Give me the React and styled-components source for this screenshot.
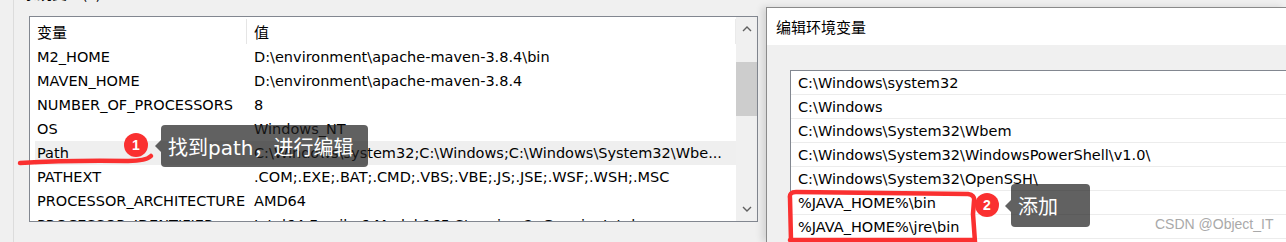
import React from 'react';
import styled, { createGlobalStyle } from 'styled-components';

const GlobalStyle = createGlobalStyle`
  html, body {
    margin: 0;
    padding: 0;
    background: #f0f0f0;
    overflow: hidden;
  }
  #root {
    height: 242px;
  }
`;

const FONT = `"DejaVu Sans", "Noto Sans CJK SC", sans-serif`;
const CJK = `"Noto Sans CJK SC", "DejaVu Sans", sans-serif`;
const TIP_FONT = `"DejaVu Sans", "Noto Sans CJK SC", sans-serif`;
const RED = '#fa3030';

const Page = styled.div`
  position: relative;
  display: flex;
  width: 1286px;
  height: 242px;
  overflow: hidden;
  font-family: ${FONT};
  font-size: 14.5px;
  color: #000;
`;

/* ---------- left window ---------- */

const LeftWindow = styled.section`
  width: 766px;
  flex: none;
  background: #f0f0f0;
  padding-left: 13px;
  box-sizing: border-box;
`;

const GroupPane = styled.div`
  height: 100%;
  border-left: 1px solid #dcdcdc;
  padding-left: 15px;
`;

const GroupLabel = styled.div`
  height: 4px;
  overflow: hidden;
  margin-left: -7px;
  font-family: ${CJK};
  font-size: 15px;
  line-height: 20px;

  span {
    display: block;
    margin-top: -17px;
  }
`;

const VarList = styled.div`
  display: flex;
  margin-top: 12px;
  width: 729px;
  height: 206px;
  box-sizing: border-box;
  border: 1px solid #828790;
  background: #fff;
`;

const VarContent = styled.div`
  flex: 1;
  padding-left: 5px;
  overflow: hidden;
`;

const HeaderRow = styled.div`
  display: flex;
  align-items: center;
  height: 28px;
  font-family: ${CJK};
  font-size: 15px;
`;

const HeaderCell = styled.div`
  display: flex;
  align-items: center;
  box-sizing: border-box;
  width: ${(p) => (p.$first ? '212px' : 'auto')};
  flex: ${(p) => (p.$first ? 'none' : '1')};
  height: 25px;
  padding-left: ${(p) => (p.$first ? '2px' : '7px')};
  border-right: 1px solid ${(p) => (p.$first ? '#e5e5e5' : '#eaeaea')};
`;

const VarRow = styled.div`
  display: flex;
  align-items: center;
  height: 24px;
  background: ${(p) => (p.$selected ? '#efefef' : 'transparent')};
  white-space: nowrap;
`;

const NameCell = styled.div`
  width: 212px;
  flex: none;
  box-sizing: border-box;
  padding-left: 2px;
`;

const ValueCell = styled.div`
  flex: 1;
  padding-left: 7px;
  overflow: hidden;
`;

const Scrollbar = styled.div`
  width: 21px;
  flex: none;
  display: flex;
  flex-direction: column;
  align-items: stretch;
  background: #f0f0f0;
`;

const ScrollArrow = styled.div`
  height: 24px;
  display: flex;
  align-items: center;
  justify-content: center;
`;

const ScrollTrack = styled.div`
  flex: 1;
  padding-top: 21px;
`;

const ScrollThumb = styled.div`
  height: 54px;
  background: #cdcdcd;
`;

/* ---------- edit dialog ---------- */

const Dialog = styled.section`
  flex: 1;
  margin-top: 7px;
  border-left: 1px solid #8a8a8a;
  border-top: 1px solid #8a8a8a;
  background: #f0f0f0;
  box-shadow: -4px 0 7px rgba(0, 0, 0, 0.12);
  display: flex;
  flex-direction: column;
`;

const TitleBar = styled.header`
  height: 37px;
  background: #fff;
  display: flex;
  align-items: center;
  padding-left: 9px;
  font-family: ${CJK};
  font-size: 15px;
`;

const DialogBody = styled.div`
  flex: 1;
  padding: 25px 0 0 23px;
`;

const PathList = styled.div`
  border-left: 1px solid #828790;
  border-top: 1px solid #828790;
  background: #fff;
  height: 100%;
`;

const PathRow = styled.div`
  height: 23px;
  border-bottom: 1px solid #ececec;
  display: flex;
  align-items: center;
  padding-left: 7px;
  white-space: nowrap;
`;

/* ---------- annotations ---------- */

const Overlay = styled.svg`
  position: absolute;
  left: 0;
  top: 0;
  pointer-events: none;
`;

const Badge = styled.div`
  position: absolute;
  left: ${(p) => p.$x - 12}px;
  top: ${(p) => p.$y - 12}px;
  width: 24px;
  height: 24px;
  border-radius: 50%;
  background: ${RED};
  color: #fff;
  font-family: "Liberation Sans", Arial, sans-serif;
  font-size: 14px;
  font-weight: bold;
  display: flex;
  align-items: center;
  justify-content: center;
`;

const Tip = styled.div`
  position: absolute;
  left: ${(p) => p.$x}px;
  top: ${(p) => p.$y}px;
  width: ${(p) => p.$w}px;
  height: ${(p) => p.$h}px;
  box-sizing: border-box;
  padding-left: 7px;
  border-radius: 4px;
  background: rgba(30, 30, 30, 0.7);
  color: #fff;
  font-family: ${TIP_FONT};
  font-size: 20px;
  display: flex;
  align-items: center;
  white-space: nowrap;

  &::before {
    content: '';
    position: absolute;
    left: -6px;
    top: 50%;
    margin-top: -6px;
    border-style: solid;
    border-width: 6px 6px 6px 0;
    border-color: transparent rgba(30, 30, 30, 0.7) transparent transparent;
  }
`;

const Watermark = styled.div`
  position: absolute;
  left: 1155px;
  top: 216px;
  font-family: "Liberation Sans", Arial, sans-serif;
  font-size: 14px;
  color: #a9a9a9;
`;

const vars = [
  ['M2_HOME', 'D:\\environment\\apache-maven-3.8.4\\bin'],
  ['MAVEN_HOME', 'D:\\environment\\apache-maven-3.8.4'],
  ['NUMBER_OF_PROCESSORS', '8'],
  ['OS', 'Windows_NT'],
  ['Path', 'C:\\Windows\\system32;C:\\Windows;C:\\Windows\\System32\\Wbe...'],
  ['PATHEXT', '.COM;.EXE;.BAT;.CMD;.VBS;.VBE;.JS;.JSE;.WSF;.WSH;.MSC'],
  ['PROCESSOR_ARCHITECTURE', 'AMD64'],
  ['PROCESSOR_IDENTIFIER', 'Intel64 Family 6 Model 165 Stepping 2, GenuineIntel'],
];

const paths = [
  'C:\\Windows\\system32',
  'C:\\Windows',
  'C:\\Windows\\System32\\Wbem',
  'C:\\Windows\\System32\\WindowsPowerShell\\v1.0\\',
  'C:\\Windows\\System32\\OpenSSH\\',
  '%JAVA_HOME%\\bin',
  '%JAVA_HOME%\\jre\\bin',
];

const Chevron = ({ down }) => (
  <svg width="10" height="6" viewBox="0 0 10 6">
    <polyline
      points={down ? '1,1 5,5 9,1' : '1,5 5,1 9,5'}
      fill="none"
      stroke="#606060"
      strokeWidth="1.4"
    />
  </svg>
);

export default function App() {
  return (
    <Page>
      <GlobalStyle />
      <LeftWindow>
        <GroupPane>
          <GroupLabel>
            <span>系统变量(S)</span>
          </GroupLabel>
          <VarList>
            <VarContent>
              <HeaderRow>
                <HeaderCell $first>变量</HeaderCell>
                <HeaderCell>值</HeaderCell>
              </HeaderRow>
              {vars.map(([name, value]) => (
                <VarRow key={name} $selected={name === 'Path'}>
                  <NameCell>{name}</NameCell>
                  <ValueCell>{value}</ValueCell>
                </VarRow>
              ))}
            </VarContent>
            <Scrollbar>
              <ScrollArrow>
                <Chevron />
              </ScrollArrow>
              <ScrollTrack>
                <ScrollThumb />
              </ScrollTrack>
              <ScrollArrow>
                <Chevron down />
              </ScrollArrow>
            </Scrollbar>
          </VarList>
        </GroupPane>
      </LeftWindow>

      <Dialog>
        <TitleBar>编辑环境变量</TitleBar>
        <DialogBody>
          <PathList>
            {paths.map((p) => (
              <PathRow key={p}>{p}</PathRow>
            ))}
          </PathList>
        </DialogBody>
      </Dialog>

      <Overlay width="1286" height="242" viewBox="0 0 1286 242">
        <path
          d="M20 163 Q 70 160 128 161 Q 146 161 151 156"
          fill="none"
          stroke={RED}
          strokeWidth="4.5"
          strokeLinecap="round"
        />
        <path
          d="M791 241 L790 198 Q789 192 796 192 L968 194 Q975 195 974 201 L973 214 L975 242 M790 240 L974 240"
          fill="none"
          stroke={RED}
          strokeWidth="4.5"
          strokeLinecap="round"
          strokeLinejoin="round"
        />
      </Overlay>

      <Badge $x={136} $y={145}>1</Badge>
      <Tip $x={161} $y={125} $w={207} $h={42}>找到path，进行编辑</Tip>

      <Badge $x={987} $y={205}>2</Badge>
      <Tip $x={1011} $y={184} $w={79} $h={43}>添加</Tip>

      <Watermark>CSDN @Object_IT</Watermark>
    </Page>
  );
}
